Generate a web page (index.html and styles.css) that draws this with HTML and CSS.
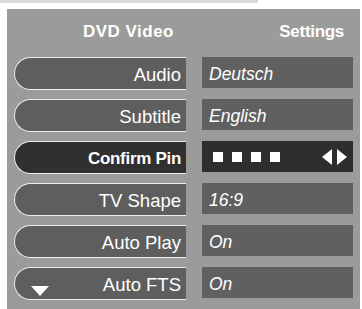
FILE: index.html
```html
<!DOCTYPE html>
<html>
<head>
<meta charset="utf-8">
<link rel="stylesheet" href="styles.css">
</head>
<body>
<div class="strip"></div>
<div class="panel">
  <div class="header">
    <div class="h-left">DVD Video</div>
    <div class="h-right">Settings</div>
  </div>
  <div class="menu">
    <div class="pill">Audio</div>
    <div class="val">Deutsch</div>

    <div class="pill">Subtitle</div>
    <div class="val">English</div>

    <div class="pill sel">Confirm Pin</div>
    <div class="val sel pin">
      <div class="dots"><span></span><span></span><span></span><span></span></div>
      <svg class="arrows" width="25" height="16" viewBox="0 0 25 16"><polygon points="0,8 10,0 10,16" fill="#fff"/><polygon points="15,0 25,8 15,16" fill="#fff"/></svg>
    </div>

    <div class="pill">TV Shape</div>
    <div class="val">16:9</div>

    <div class="pill">Auto Play</div>
    <div class="val">On</div>

    <div class="pill more"><svg class="down" width="18" height="10" viewBox="0 0 18 10"><polygon points="0,0 18,0 9,10" fill="#fff"/></svg><span>Auto FTS</span></div>
    <div class="val">On</div>
  </div>
</div>
</body>
</html>
```

FILE: styles.css
```css
html, body {
  margin: 0;
  padding: 0;
  background: #ffffff;
}
body {
  width: 362px;
  height: 309px;
  overflow: hidden;
  font-family: "Liberation Sans", Arial, sans-serif;
  color: #ffffff;
}
.strip {
  width: 258px;
  height: 3px;
  background: #dadada;
}
.panel {
  margin: 6px 2px 0 7px;
  height: 300px;
  background: #9b9b9b;
  padding: 0 7px;
}
.header {
  height: 48px;
  display: grid;
  grid-template-columns: 172px 151px;
  column-gap: 16px;
  font-weight: bold;
  font-size: 17px;
}
.h-left {
  text-align: right;
  padding-right: 12px;
  padding-top: 13px;
  letter-spacing: 0.5px;
}
.h-right {
  text-align: right;
  padding-right: 9px;
  padding-top: 13px;
  letter-spacing: -0.3px;
}
.menu {
  display: grid;
  grid-template-columns: 172px 151px;
  column-gap: 16px;
  row-gap: 9px;
  grid-auto-rows: 33px;
}
.pill {
  box-sizing: border-box;
  height: 33px;
  background: #5e5e5e;
  border: 1px solid #eeeeee;
  border-right: none;
  border-radius: 17px 0 0 17px;
  display: flex;
  align-items: center;
  justify-content: flex-end;
  padding: 3px 5px 0 0;
  font-size: 18.5px;
}
.pill.sel {
  background: #303030;
  font-weight: bold;
  font-size: 17px;
  letter-spacing: -0.3px;
}
.pill.more {
  justify-content: space-between;
}
.down {
  align-self: flex-end;
  margin: 0 0 3px 16px;
}
.val {
  box-sizing: border-box;
  height: 31px;
  background: #606060;
  display: flex;
  align-items: center;
  padding: 3px 0 0 7px;
  font-style: italic;
  font-size: 17.5px;
}
.val.sel {
  background: #2e2e2e;
}
.pin {
  padding: 0 6px 0 11px;
  justify-content: space-between;
}
.dots {
  display: flex;
  gap: 9px;
}
.dots span {
  width: 10px;
  height: 10px;
  background: #ffffff;
}
```
